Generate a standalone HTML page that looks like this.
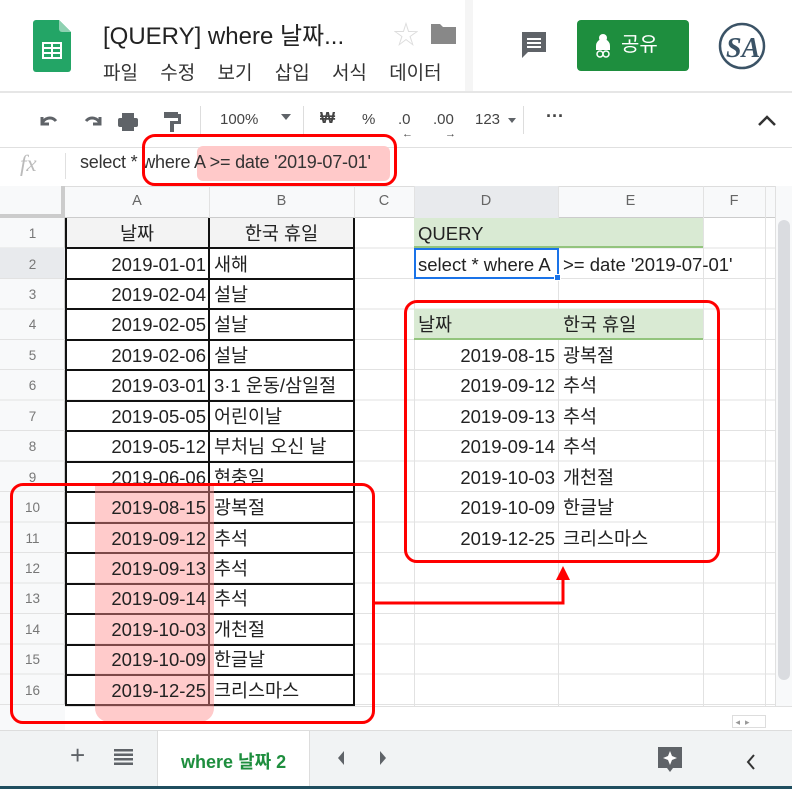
<!DOCTYPE html>
<html><head><meta charset="utf-8"><style>
*{margin:0;padding:0;box-sizing:border-box}
body{width:792px;height:789px;overflow:hidden;background:#fff;font-family:"Liberation Sans","Noto Sans CJK KR",sans-serif;position:relative;color:#222}
.a{position:absolute}
.c{position:absolute;height:30px;line-height:31px;font-size:18.5px;white-space:nowrap;color:#222}
.r{text-align:right}
.rh{position:absolute;left:0;width:65px;text-align:center;font-size:13.5px;color:#777;height:30px;line-height:31px}
.ch{position:absolute;top:186px;height:31px;line-height:31px;text-align:center;font-size:14.5px;color:#666}
.vl{position:absolute;top:186px;width:1px;height:527px;background:#e2e2e2}
.bh{position:absolute;left:65px;width:290px;height:2px;background:#111}
.g{fill:#5f6368}
</style></head><body>
<!-- header -->
<svg class="a" style="left:33px;top:20px" width="38" height="52" viewBox="0 0 38 52"><path d="M3 0h23l12 12v37a3 3 0 0 1-3 3H3a3 3 0 0 1-3-3V3a3 3 0 0 1 3-3z" fill="#23a566"/><path d="M26 0l12 12H29a3 3 0 0 1-3-3z" fill="#8ed1b1"/><rect x="9" y="22" width="20" height="17" fill="#fff"/><g fill="#23a566"><rect x="11" y="24" width="7" height="3"/><rect x="20" y="24" width="7" height="3"/><rect x="11" y="29" width="7" height="3"/><rect x="20" y="29" width="7" height="3"/><rect x="11" y="34" width="7" height="3"/><rect x="20" y="34" width="7" height="3"/></g></svg>
<div class="a" style="left:103px;top:16px;font-size:24px;color:#222">[QUERY] where 날짜...</div>
<div class="a" style="left:393px;top:15px;font-size:26px;color:#ddd">☆</div>
<svg class="a" style="left:431px;top:22px" width="25" height="22"><path d="M0 2h9l3 3h13v17H0z" fill="#888"/></svg>
<div class="a" style="left:103px;top:58px;font-size:19px;color:#333;word-spacing:17px">파일 수정 보기 삽입 서식 데이터</div>
<div class="a" style="left:465px;top:0;width:8px;height:92px;background:#f5f5f5"></div>
<svg class="a" style="left:520px;top:30px" width="30" height="30"><path d="M2 2h24v20H8l-6 6z" fill="#5f6368"/><rect x="7" y="8" width="14" height="2" fill="#fff"/><rect x="7" y="12" width="14" height="2" fill="#fff"/><rect x="7" y="16" width="14" height="2" fill="#fff"/></svg>
<div class="a" style="left:577px;top:20px;width:112px;height:51px;background:#1e8e3e;border-radius:4px;color:#fff;font-size:20px;line-height:51px;padding-left:44px">공유</div>
<svg class="a" style="left:595px;top:33px" width="20" height="26"><circle cx="8" cy="5" r="4" fill="#fff"/><path d="M1 17v-4a7 7 0 0 1 14 0v4z" fill="#fff"/><circle cx="5" cy="21" r="3" fill="none" stroke="#fff" stroke-width="1.5"/><circle cx="11" cy="21" r="3" fill="none" stroke="#fff" stroke-width="1.5"/></svg>
<svg class="a" style="left:716px;top:20px" width="52" height="52"><circle cx="26" cy="26" r="22" fill="none" stroke="#3b5366" stroke-width="2.5"/><text x="10" y="37" font-family="Liberation Serif" font-style="italic" font-weight="bold" font-size="28" fill="#3b5366">SA</text></svg>
<div class="a" style="left:0;top:91px;width:792px;height:2px;background:#e6e6e6"></div>
<!-- toolbar -->
<svg class="a" style="left:38px;top:110px" width="125" height="24"><path d="M4 14a8 8 0 0 1 14-3M4 7v7h7" stroke="#5f6368" stroke-width="3" fill="none"/><path d="M62 14a8 8 0 0 0-14-3M62 7v7h-7" stroke="#5f6368" stroke-width="3" fill="none"/><rect x="84" y="3" width="12" height="5" class="g"/><rect x="80" y="8" width="20" height="9" rx="2" class="g"/><rect x="84" y="14" width="12" height="7" class="g"/></svg>
<svg class="a" style="left:162px;top:110px" width="22" height="24"><rect x="2" y="2" width="14" height="6" class="g"/><rect x="16" y="4" width="3" height="8" class="g"/><rect x="8" y="11" width="11" height="3" class="g"/><rect x="8" y="12" width="4" height="10" class="g"/></svg>
<div class="a" style="left:200px;top:106px;width:1px;height:28px;background:#ddd"></div>
<div class="a" style="left:220px;top:111px;font-size:15px;color:#444">100%</div>
<div class="a" style="left:281px;top:114px;border:5px solid transparent;border-top:6px solid #5f6368"></div>
<div class="a" style="left:303px;top:106px;width:1px;height:28px;background:#ddd"></div>
<div class="a" style="left:320px;top:110px;font-size:16px;color:#444;font-weight:bold">₩</div>
<div class="a" style="left:362px;top:111px;font-size:15px;color:#444">%</div>
<div class="a" style="left:398px;top:111px;font-size:15px;color:#444">.0</div>
<div class="a" style="left:433px;top:111px;font-size:15px;color:#444">.00</div>
<div class="a" style="left:402px;top:128px;font-size:11px;color:#444">←</div>
<div class="a" style="left:445px;top:128px;font-size:11px;color:#444">→</div>
<div class="a" style="left:475px;top:111px;font-size:15px;color:#444">123</div>
<div class="a" style="left:508px;top:118px;border:4px solid transparent;border-top:5px solid #5f6368"></div>
<div class="a" style="left:523px;top:106px;width:1px;height:28px;background:#ddd"></div>
<div class="a" style="left:546px;top:106px;font-size:18px;color:#444;font-weight:bold">···</div>
<svg class="a" style="left:757px;top:114px" width="20" height="14"><path d="M2 11l8-8 8 8" stroke="#333" stroke-width="2.5" fill="none"/></svg>
<!-- formula bar -->
<div class="a" style="left:0;top:147px;width:792px;height:1px;background:#e0e0e0"></div>
<div class="a" style="left:20px;top:151px;font-family:'Liberation Serif';font-style:italic;font-size:23px;color:#bbb">fx</div>
<div class="a" style="left:65px;top:153px;width:1px;height:26px;background:#e0e0e0"></div>
<div class="a" style="left:197px;top:146px;width:193px;height:35px;background:#ffc9c9;border-radius:6px"></div>
<div class="a" style="left:80px;top:152px;font-size:18px;color:#333;letter-spacing:-0.2px">select * where A &gt;= date '2019-07-01'</div>
<div class="a" style="left:142px;top:134px;width:255px;height:52px;border:3px solid #f00;border-radius:13px"></div>
<!-- column headers -->
<div class="a" style="left:0;top:186px;width:775px;height:32px;background:#f8f9fa;border-top:1px solid #ddd;border-bottom:1px solid #ccc"></div>
<div class="a" style="left:414px;top:186px;width:144px;height:32px;background:#e8eaed"></div>
<div class="a" style="left:0;top:186px;width:65px;height:32px;background:#f8f9fa;border-right:4px solid #ccc;border-bottom:4px solid #ccc"></div>
<div class="ch" style="left:65px;width:144px">A</div><div class="ch" style="left:209px;width:145px">B</div><div class="ch" style="left:354px;width:60px">C</div><div class="ch" style="left:414px;width:144px">D</div><div class="ch" style="left:558px;width:145px">E</div><div class="ch" style="left:703px;width:62px">F</div>
<!-- grid -->
<div class="a" style="left:0;top:218px;width:775px;height:495px;background:repeating-linear-gradient(to bottom,transparent 0,transparent 29.45px,#e2e2e2 29.45px,#e2e2e2 30.45px)"></div>
<div class="a" style="left:0;top:218px;width:65px;height:495px;background:#f8f9fa;border-right:1px solid #ccc"></div>
<div class="a" style="left:0;top:218px;width:65px;height:495px;background:repeating-linear-gradient(to bottom,transparent 0,transparent 29.45px,#e2e2e2 29.45px,#e2e2e2 30.45px)"></div>
<div class="a" style="left:0;top:248px;width:65px;height:30px;background:#e8eaed"></div>
<div class="vl" style="left:209px"></div><div class="vl" style="left:354px"></div><div class="vl" style="left:414px"></div><div class="vl" style="left:558px"></div><div class="vl" style="left:703px"></div><div class="vl" style="left:765px"></div>
<div class="a" style="left:66px;top:218px;width:288px;height:30px;background:#f3f3f3"></div>
<div class="a" style="left:414px;top:218px;width:289px;height:30px;background:#d9ead3;border-bottom:2px solid #93c47d"></div>
<div class="a" style="left:414px;top:309px;width:289px;height:31px;background:#d9ead3;border-bottom:2px solid #93c47d"></div>
<!-- black borders -->
<div class="a" style="left:65px;top:218px;width:290px;height:488px;border:2px solid #111;border-top:none"></div>
<div class="a" style="left:208px;top:218px;width:2px;height:488px;background:#111"></div>
<div class="bh" style="top:247px"></div><div class="bh" style="top:278px"></div><div class="bh" style="top:308px"></div><div class="bh" style="top:339px"></div><div class="bh" style="top:369px"></div><div class="bh" style="top:400px"></div><div class="bh" style="top:430px"></div><div class="bh" style="top:461px"></div><div class="bh" style="top:491px"></div><div class="bh" style="top:522px"></div><div class="bh" style="top:552px"></div><div class="bh" style="top:583px"></div><div class="bh" style="top:613px"></div><div class="bh" style="top:644px"></div><div class="bh" style="top:674px"></div>
<!-- row headers -->
<div class="rh" style="top:218px">1</div><div class="rh" style="top:248.5px">2</div><div class="rh" style="top:279px">3</div><div class="rh" style="top:309.4px">4</div><div class="rh" style="top:339.8px">5</div><div class="rh" style="top:370.3px">6</div><div class="rh" style="top:400.7px">7</div><div class="rh" style="top:431.2px">8</div><div class="rh" style="top:461.6px">9</div><div class="rh" style="top:492px">10</div><div class="rh" style="top:522.5px">11</div><div class="rh" style="top:553px">12</div><div class="rh" style="top:583.4px">13</div><div class="rh" style="top:613.9px">14</div><div class="rh" style="top:644.3px">15</div><div class="rh" style="top:674.8px">16</div>
<!-- scrollbars -->
<div class="a" style="left:775px;top:186px;width:17px;height:527px;background:#f8f9fa;border-left:1px solid #e0e0e0"></div>
<div class="a" style="left:778px;top:220px;width:12px;height:460px;background:#dadce0;border-radius:6px"></div>
<div class="a" style="left:65px;top:706px;width:727px;height:24px;background:#fff;border-top:1px solid #e0e0e0"></div>
<div class="a" style="left:0;top:705px;width:65px;height:25px;background:#f8f9fa"></div>
<div class="a" style="left:732px;top:715px;width:34px;height:13px;border:1px solid #ddd;font-size:9px;color:#999;line-height:12px">&nbsp;◂ &nbsp;▸</div>
<!-- pink highlight -->
<div class="a" style="left:95px;top:484px;width:119px;height:238px;background:rgba(255,140,140,0.45);border-radius:0 0 14px 14px"></div>
<!-- A/B data -->
<div class="c" style="left:65px;top:218px;width:144px;text-align:center">날짜</div><div class="c" style="left:209px;top:218px;width:145px;text-align:center">한국 휴일</div>
<div class="c r" style="left:65px;top:248.5px;width:141px">2019-01-01</div><div class="c" style="left:214px;top:248.5px">새해</div>
<div class="c r" style="left:65px;top:279px;width:141px">2019-02-04</div><div class="c" style="left:214px;top:279px">설날</div>
<div class="c r" style="left:65px;top:309.4px;width:141px">2019-02-05</div><div class="c" style="left:214px;top:309.4px">설날</div>
<div class="c r" style="left:65px;top:339.8px;width:141px">2019-02-06</div><div class="c" style="left:214px;top:339.8px">설날</div>
<div class="c r" style="left:65px;top:370.3px;width:141px">2019-03-01</div><div class="c" style="left:214px;top:370.3px">3·1 운동/삼일절</div>
<div class="c r" style="left:65px;top:400.7px;width:141px">2019-05-05</div><div class="c" style="left:214px;top:400.7px">어린이날</div>
<div class="c r" style="left:65px;top:431.2px;width:141px">2019-05-12</div><div class="c" style="left:214px;top:431.2px">부처님 오신 날</div>
<div class="c r" style="left:65px;top:461.6px;width:141px">2019-06-06</div><div class="c" style="left:214px;top:461.6px">현충일</div>
<div class="c r" style="left:65px;top:492px;width:141px">2019-08-15</div><div class="c" style="left:214px;top:492px">광복절</div>
<div class="c r" style="left:65px;top:522.5px;width:141px">2019-09-12</div><div class="c" style="left:214px;top:522.5px">추석</div>
<div class="c r" style="left:65px;top:553px;width:141px">2019-09-13</div><div class="c" style="left:214px;top:553px">추석</div>
<div class="c r" style="left:65px;top:583.4px;width:141px">2019-09-14</div><div class="c" style="left:214px;top:583.4px">추석</div>
<div class="c r" style="left:65px;top:613.9px;width:141px">2019-10-03</div><div class="c" style="left:214px;top:613.9px">개천절</div>
<div class="c r" style="left:65px;top:644.3px;width:141px">2019-10-09</div><div class="c" style="left:214px;top:644.3px">한글날</div>
<div class="c r" style="left:65px;top:674.8px;width:141px">2019-12-25</div><div class="c" style="left:214px;top:674.8px">크리스마스</div>
<!-- D/E data -->
<div class="c" style="left:418px;top:218px">QUERY</div>
<div class="a" style="left:414px;top:248px;width:145px;height:31px;background:#fff;border:2px solid #1a73e8"></div>
<div class="a" style="left:554px;top:274px;width:7px;height:7px;background:#1a73e8;border:1px solid #fff"></div>
<div class="c" style="left:418px;top:248.5px;width:139px;overflow:hidden">select * where A</div>
<div class="c" style="left:563px;top:248.5px">&gt;= date '2019-07-01'</div>
<div class="c" style="left:418px;top:309.4px">날짜</div><div class="c" style="left:563px;top:309.4px">한국 휴일</div>
<div class="c r" style="left:414px;top:339.8px;width:141px">2019-08-15</div><div class="c" style="left:563px;top:339.8px">광복절</div>
<div class="c r" style="left:414px;top:370.3px;width:141px">2019-09-12</div><div class="c" style="left:563px;top:370.3px">추석</div>
<div class="c r" style="left:414px;top:400.7px;width:141px">2019-09-13</div><div class="c" style="left:563px;top:400.7px">추석</div>
<div class="c r" style="left:414px;top:431.2px;width:141px">2019-09-14</div><div class="c" style="left:563px;top:431.2px">추석</div>
<div class="c r" style="left:414px;top:461.6px;width:141px">2019-10-03</div><div class="c" style="left:563px;top:461.6px">개천절</div>
<div class="c r" style="left:414px;top:492px;width:141px">2019-10-09</div><div class="c" style="left:563px;top:492px">한글날</div>
<div class="c r" style="left:414px;top:522.5px;width:141px">2019-12-25</div><div class="c" style="left:563px;top:522.5px">크리스마스</div>
<!-- tab bar -->
<div class="a" style="left:0;top:730px;width:792px;height:56px;background:#f1f3f4;border-top:1px solid #ddd"></div>
<div class="a" style="left:70px;top:740px;font-size:26px;color:#5f6368">+</div>
<svg class="a" style="left:114px;top:749px" width="20" height="16"><g fill="#5f6368"><rect y="0" width="19" height="2.5"/><rect y="4.5" width="19" height="2.5"/><rect y="9" width="19" height="2.5"/><rect y="13.5" width="19" height="2.5"/></g></svg>
<div class="a" style="left:157px;top:731px;width:153px;height:55px;background:#fff;border-left:1px solid #ddd;border-right:1px solid #ddd"></div>
<div class="a" style="left:181px;top:748px;font-size:18px;color:#1e8e3e;font-weight:bold">where 날짜 2</div>
<svg class="a" style="left:336px;top:750px" width="60" height="16"><path d="M8 1L2 8l6 7z" fill="#5f6368"/><path d="M44 1l6 7-6 7z" fill="#5f6368"/></svg>
<svg class="a" style="left:656px;top:745px" width="30" height="30"><path d="M2 2h24v21h-9l-3 4-3-4H2z" fill="#5f6368"/><path d="M14 6l2 5 5 2-5 2-2 5-2-5-5-2 5-2z" fill="#fff"/></svg>
<svg class="a" style="left:745px;top:753px" width="12" height="18"><path d="M9 2L3 9l6 7" stroke="#333" stroke-width="2" fill="none"/></svg>
<div class="a" style="left:0;top:786px;width:792px;height:3px;background:#1f4e5f"></div>
<!-- red annotations -->
<div class="a" style="left:10px;top:483px;width:365px;height:241px;border:3px solid #f00;border-radius:13px"></div>
<div class="a" style="left:404px;top:300px;width:316px;height:263px;border:3px solid #f00;border-radius:13px"></div>
<svg class="a" style="left:370px;top:560px" width="210" height="50"><path d="M5 43H193V18" stroke="#f00" stroke-width="3" fill="none"/><path d="M186 20l7-14 7 14z" fill="#f00"/></svg>
</body></html>
